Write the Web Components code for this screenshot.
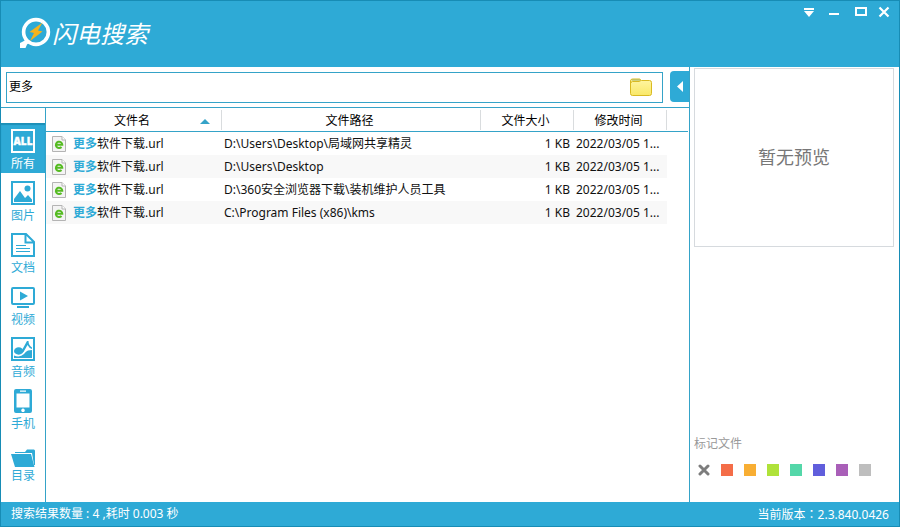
<!DOCTYPE html>
<html lang="zh-CN">
<head>
<meta charset="utf-8">
<title>闪电搜索</title>
<style>
html,body{margin:0;height:100%}
body{font:12px/16px "Noto Sans","Noto Sans CJK SC",sans-serif;color:#111;--blue:#2eaad6;--line:#35a3c8;--edge:#178cb5}
</style>
</head>
<body>
<search-window></search-window>
<script>
function define(name, html, setup) {
  const t = document.createElement('template');
  t.innerHTML = '<style>*{box-sizing:border-box}button{font:inherit;color:inherit;background:none;border:0;padding:0;margin:0;cursor:pointer}svg{display:block}</style>' + html;
  customElements.define(name, class extends HTMLElement {
    constructor() {
      super();
      this.attachShadow({mode: 'open'}).append(t.content.cloneNode(true));
    }
    connectedCallback() { if (setup) setup(this, this.shadowRoot); }
  });
}

define('title-bar', `
<style>
:host{display:flex;justify-content:space-between;align-items:flex-start;height:66px;background:var(--blue);color:#fff}
.logo{display:flex;align-items:center;gap:1px;padding:15px 0 0 18px}
h1{margin:0;font:italic 24px/32px "Noto Sans CJK SC",sans-serif}
.ctl{display:flex;gap:9px;padding:3px 7px 0 0}
.ctl button{width:16px;height:16px}
.ctl svg{overflow:visible}
</style>
<div class="logo">
<svg width="32" height="34" viewBox="0 0 32 34" aria-hidden="true"><circle cx="17" cy="16" r="12.400" fill="none" stroke="#fff" stroke-width="3.600"/><path d="M8 23l3 3-3 2.500-1.500 3.500H1v-5l3-1.500z" fill="#fff"/><path d="M23.500 6.500L10.500 16l4.500 1-4 8L23.500 15.500l-4.500-1z" fill="#f5b31c"/></svg>
<h1>闪电搜索</h1>
</div>
<div class="ctl">
<button aria-label="菜单"><svg width="16" height="16"><path d="M3 4h10v2H3zM3 7h10L8 13z" fill="#fff"/></svg></button>
<button aria-label="最小化"><svg width="16" height="16"><path d="M3 9h10v2H3z" fill="#fff"/></svg></button>
<button aria-label="最大化"><svg width="16" height="16"><path d="M5 4h10v7H5z" fill="none" stroke="#fff" stroke-width="2"/></svg></button>
<button aria-label="关闭"><svg width="16" height="16"><path d="M3.500 3.500l9 9M12.500 3.500l-9 9" stroke="#fff" stroke-width="2.200"/></svg></button>
</div>`);

define('search-bar', `
<style>
:host{display:flex;height:41px;padding:4px 0;gap:7px;border-bottom:1px solid var(--line)}
.box{flex:1;min-width:0;display:flex;align-items:center;border:1px solid var(--line);margin:1px 0 0 5px;padding:0 9px 2px 2px}
input{flex:1;min-width:0;border:0;outline:0;padding:0;font:inherit;color:#000;background:none}
.toggle{width:19px;height:31px;background:var(--blue);border-radius:4px 0 0 4px}
</style>
<div class="box"><input type="text" aria-label="搜索" value="更多">
<button aria-label="浏览文件夹"><svg width="24" height="20" viewBox="0 0 24 20"><defs><linearGradient id="g" x2="0" y2="1"><stop stop-color="#fff6a4"/><stop offset="1" stop-color="#f9e868"/></linearGradient></defs><path d="M1.500 4q0-2 2-2h7l2 1.500h8q2 0 2 2v11q0 2-2 2h-17q-2 0-2-2z" fill="url(#g)" stroke="#d9ba22"/><path d="M2 6q0-1.500 1.500-1.500H10l2-1" fill="none" stroke="#d9ba22"/><path d="M3 3h8" stroke="#9cad5c"/></svg></button></div>
<button class="toggle" aria-label="收起预览"><svg width="19" height="31"><path d="M13 10v11l-6-5.500z" fill="#fff"/></svg></button>`);

define('nav-item', `
<style>
:host{display:block}
button{display:flex;flex-direction:column;align-items:center;width:100%;height:50px;padding-top:6px;gap:3px;color:var(--blue)}
:host([active]) button{background:var(--blue);color:#fff;box-shadow:inset 0 2px 1px #1c90b8}
</style>
<button><slot name="icon"></slot><span><slot></slot></span></button>`);

define('category-nav', `
<style>
:host{display:flex;flex-direction:column;gap:2px;width:45px;padding-top:15px;border-right:1px solid var(--line);flex:none}
text{font:800 10px "Open Sans","Noto Sans",sans-serif}
svg{overflow:visible}
</style>
<nav-item active><svg slot="icon" width="24" height="24"><path d="M1 1h22v22H1z" fill="none" stroke="#fff" stroke-width="2"/><text x="12" y="16" text-anchor="middle" fill="#fff" stroke="#fff" stroke-width=".4">ALL</text></svg>所有</nav-item>
<nav-item><svg slot="icon" width="24" height="24"><path d="M1 1h22v22H1z" fill="none" stroke="#2eaad6" stroke-width="2"/><path d="M3 21v-3l6-8 5 7 3-3 4 4.500V21z" fill="#2eaad6"/><circle cx="16.500" cy="7.500" r="3" fill="#2eaad6"/></svg>图片</nav-item>
<nav-item><svg slot="icon" width="24" height="24"><path d="M1 1h14l8 8v14H1zM14.500 1v8.500H23" fill="none" stroke="#2eaad6" stroke-width="2"/><path d="M5 12.500h10M5 15.500h14M5 18.500h14" stroke="#2eaad6"/></svg>文档</nav-item>
<nav-item><svg slot="icon" width="24" height="24"><rect x="1" y="3" width="22" height="16" rx="1" fill="none" stroke="#2eaad6" stroke-width="2"/><path d="M9 6.500v9l8-4.500zM6 21h12v2H6z" fill="#2eaad6"/></svg>视频</nav-item>
<nav-item><svg slot="icon" width="24" height="24"><path d="M1 1h22v22H1z" fill="none" stroke="#2eaad6" stroke-width="2"/><path d="M3 18.500q6 2.500 10-1.500 2-3 4-3.500l4-.5v8H3z" fill="#2eaad6"/><ellipse cx="7.700" cy="14" rx="4.700" ry="3.700" fill="#2eaad6"/><path d="M10.500 14L16 4h1.500q0 4 3.500 6.500v1.500q-3-1-4.500-4L12.500 15z" fill="#2eaad6"/></svg>音频</nav-item>
<nav-item><svg slot="icon" width="24" height="24"><path fill-rule="evenodd" d="M5 0h14q2 0 2 2v20q0 2-2 2H5q-2 0-2-2V2q0-2 2-2zM5.500 4.500v14h13v-14zM9 1.500v1.200h6V1.500zM12 19.500a1.800 1.800 0 1 0 .01 0z" fill="#2eaad6"/></svg>手机</nav-item>
<nav-item><svg slot="icon" width="24" height="24"><path d="M4 12v-1h10l2-2.500h7l1 1V24h-1L21 12z" fill="#2eaad6"/><path d="M0 13h20l3.500 13H4z" fill="#2eaad6"/></svg>目录</nav-item>`);

define('result-table', `
<style>
:host{display:block;flex:1;min-width:0;padding-right:1px}
table{width:100%;table-layout:fixed;border-collapse:separate;border-spacing:0}
th,td{padding:0;height:23px;white-space:nowrap;overflow:hidden;text-align:left;font-weight:400}
th{height:24px;border-bottom:1px solid var(--line);color:#000}
th button{display:flex;align-items:center;justify-content:center;width:100%;height:20px;border-right:1px solid #d9dcde;padding:2px 3px 0 0}
th.sort button{display:grid;grid-template-columns:1fr auto 1fr}
th.sort svg{justify-self:end;margin-right:8px}
.name{display:flex;align-items:center;gap:6px;padding-left:6px}
mark{background:none;color:var(--blue);font-weight:700}
.path{padding-left:2px}
.size{text-align:right;padding-right:4px}
.date{padding:0 4px 0 2px;text-overflow:ellipsis}
tbody tr:nth-child(even) td:not(:last-child){background:#f8f8f8}
</style>
<table><colgroup><col style="width:176px"><col><col style="width:93px"><col style="width:93px"><col style="width:21px"></colgroup>
<thead><tr><th class="sort"><button><i></i>文件名<svg width="10" height="6"><path d="M0 6l5-5 5 5z" fill="#35a3c8"/></svg></button></th><th><button>文件路径</button></th><th><button>文件大小</button></th><th><button>修改时间</button></th><th></th></tr></thead>
<tbody></tbody></table>`, (host, root) => {
  const icon = '<svg width="15" height="16" aria-hidden="true"><path d="M.5.5H10L13.500 4v11.500H.5z" fill="#f4f4f4" stroke="#b4b4b4"/><path d="M10 .5V4h3.500" fill="#fff" stroke="#b4b4b4"/><path d="M4 8.800h6.300a3.200 3.200 0 1 0-.8 2.200" fill="none" stroke="#55bb22" stroke-width="2"/></svg>';
  const paths = ['D:\\Users\\Desktop\\局域网共享精灵', 'D:\\Users\\Desktop', 'D:\\360安全浏览器下载\\装机维护人员工具', 'C:\\Program Files (x86)\\kms'];
  root.querySelector('tbody').innerHTML = paths.map(p =>
    `<tr><td><div class="name">${icon}<span><mark>更多</mark>软件下载.url</span></div></td><td class="path">${p}</td><td class="size">1 KB</td><td class="date">2022/03/05 1...</td><td></td></tr>`).join('');
});

define('preview-pane', `
<style>
:host{display:flex;box-sizing:border-box;flex-direction:column;justify-content:space-between;width:210px;flex:none;border-left:1px solid var(--line);padding:1px 5px 26px 4px}
.view{display:flex;align-items:center;justify-content:center;height:179px;padding-bottom:2px;border:1px solid #d6dade;color:#777;font-size:18px;line-height:24px}
h2{margin:0;font:inherit;color:#999}
.tags{display:flex;gap:11px;padding:12px 0 0 4px}
.tags button{width:12px;height:12px;background:var(--c)}
</style>
<div class="view">暂无预览</div>
<section><h2>标记文件</h2><div class="tags">
<button aria-label="清除标记"><svg width="12" height="12"><path d="M2 2l8 8M10 2l-8 8" stroke="#7d7d7d" stroke-width="3" stroke-linecap="round"/></svg></button>
<button aria-label="红色" style="--c:#f46d48"></button><button aria-label="橙色" style="--c:#f8ae33"></button><button aria-label="绿色" style="--c:#afe23a"></button><button aria-label="青色" style="--c:#54d7a9"></button><button aria-label="蓝色" style="--c:#605edc"></button><button aria-label="紫色" style="--c:#a95fb8"></button><button aria-label="灰色" style="--c:#bebebe"></button>
</div></section>`);

define('status-bar', `
<style>:host{display:flex;justify-content:space-between;align-items:center;height:24px;padding:0 10px;background:var(--blue);color:#fff}</style>
<slot></slot>`);

define('search-window', `
<style>
:host{display:flex;flex-direction:column;height:100%;min-height:500px;box-sizing:border-box;border:1px solid var(--edge);background:#fff}
main,.left,.list{display:flex;min-height:0}
main,.list{flex:1}
.left{flex:1;min-width:0;flex-direction:column}
.colon{font-family:"Noto Sans CJK TC",sans-serif}
</style>
<title-bar></title-bar>
<main><div class="left"><search-bar></search-bar><div class="list"><category-nav></category-nav><result-table></result-table></div></div><preview-pane></preview-pane></main>
<status-bar><span>搜索结果数量 : 4 ,耗时 0.003 秒</span><span>当前版本<span class="colon" lang="zh-TW">：</span>2.3.840.0426</span></status-bar>`);
</script>
</body>
</html>
